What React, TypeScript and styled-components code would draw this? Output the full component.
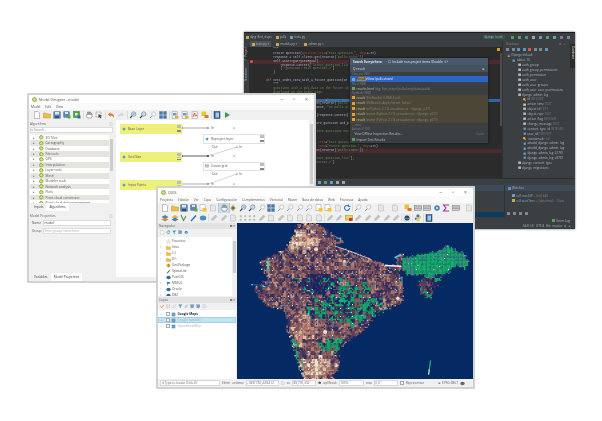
import * as React from 'react';
import { useMemo } from 'react';
import styled, { createGlobalStyle } from 'styled-components';

const GlobalStyle = createGlobalStyle`
  html, body { margin: 0; padding: 0; background: #fff; }
`;

const Stage = styled.div`
  position: relative;
  width: 602px;
  height: 421px;
  overflow: hidden;
  background: #fff;
  filter: blur(0.4px);
  font-family: 'Open Sans', 'Liberation Sans', sans-serif;
`;

const Window = styled.div<{ $x: number; $y: number; $w: number; $h: number }>`
  position: absolute;
  left: ${(p) => p.$x}px;
  top: ${(p) => p.$y}px;
  width: ${(p) => p.$w}px;
  height: ${(p) => p.$h}px;
  box-sizing: border-box;
  display: flex;
  flex-direction: column;
  overflow: hidden;
`;

const LightWindow = styled(Window)`
  background: #f0f0f0;
  border: 2px solid #d2d2d2;
  border-radius: 1px;
  color: #444;
  font-size: 3.2px;
`;

const DarkWindow = styled(Window)`
  background: #3c3f41;
  border-top: 1px solid #1c1c1c;
  box-shadow: 0 0 2px #555;
  color: #a9b7c6;
  font-size: 3px;
`;

/* ---------- shared light-window chrome ---------- */

const TitleBar = styled.div`
  height: 8px;
  flex: none;
  display: flex;
  align-items: center;
  gap: 2px;
  padding: 0 6px 0 3px;
  background: #fff;
  font-size: 3.6px;
  color: #555;
`;

const TitleText = styled.span`
  flex: 1;
`;

const WinControls = styled.div`
  display: flex;
  align-items: center;
  gap: 10px;
  font-family: 'Liberation Sans', sans-serif;
  font-size: 5px;
  line-height: 7px;
  color: #666;
`;

const MenuBar = styled.div<{ $gap: number }>`
  height: 7px;
  flex: none;
  display: flex;
  align-items: center;
  gap: ${(p) => p.$gap}px;
  padding: 0 2px;
  background: #fafafa;
  font-size: 3.2px;
  white-space: nowrap;
  color: #555;
`;

const ToolBar = styled.div<{ $gap: number; $pad: number }>`
  height: 10px;
  flex: none;
  display: flex;
  align-items: center;
  gap: ${(p) => p.$gap}px;
  padding-left: ${(p) => p.$pad}px;
  background: #f0f0f0;
  overflow: hidden;
`;

const Sep = styled.span`
  width: 1px;
  height: 8px;
  margin: 0 -0.5px;
  background: #dcdcdc;
  flex: none;
`;

const DropGap = styled.span`
  width: 2.5px;
  flex: none;
`;

const Pressed = styled.span`
  display: flex;
  margin: -1px;
  padding: 1px;
  background: #c5dff2;
  outline: 1px solid #a8cfe8;
`;

const IconSvg = styled.svg<{ $size: number }>`
  width: ${(p) => p.$size}px;
  height: ${(p) => p.$size}px;
  flex: none;
  display: block;
`;

const Glyph = ({ kind, size = 8 }: { kind: string; size?: number }) => {
  const parts: Record<string, React.ReactNode> = {
    doc: <path d="M3 1h7l3 3v11H3z" fill="#fff" stroke="#888" />,
    folder: <path d="M1 4h5l1 2h8v8H1z" fill="#f0bc44" stroke="#c99a2e" />,
    disk: (
      <>
        <rect x="1.5" y="1.5" width="13" height="13" fill="#5c86b4" stroke="#3f6690" />
        <rect x="4" y="2" width="8" height="5" fill="#dfe9f2" />
        <rect x="4" y="10" width="8" height="4" fill="#2f5278" />
      </>
    ),
    diskadd: (
      <>
        <rect x="1.5" y="1.5" width="11" height="11" fill="#5c86b4" stroke="#3f6690" />
        <rect x="4" y="2" width="6" height="4" fill="#dfe9f2" />
        <rect x="9" y="9" width="6" height="6" fill="#5aa83c" />
      </>
    ),
    export: (
      <>
        <rect x="1" y="1" width="12" height="12" fill="#4ea84a" stroke="#2f7a31" />
        <rect x="4" y="4" width="5" height="5" fill="#d9efc9" />
        <rect x="9" y="9" width="6" height="6" fill="#2f6aa8" />
      </>
    ),
    note: (
      <>
        <rect x="2" y="1.5" width="10" height="12" fill="#fff" stroke="#999" />
        <rect x="7" y="8" width="8" height="7" fill="#f2c230" />
      </>
    ),
    report: (
      <>
        <rect x="2" y="1.5" width="11" height="13" fill="#eee" stroke="#999" />
        <rect x="4" y="4" width="7" height="5" fill="#6d9dcc" />
        <rect x="8" y="10" width="7" height="5" fill="#eab23a" />
      </>
    ),
    pdf: (
      <>
        <rect x="2" y="1.5" width="11" height="13" fill="#eee" stroke="#999" />
        <path d="M4 12l3-8 2 6 3-2" fill="none" stroke="#d0402f" strokeWidth="1.6" />
      </>
    ),
    hand: (
      <path
        d="M5 14L2 8l1.5-1L5 8V2.5h1.5V7h1V1.5H9V7h1V2.5h1.5V8h1V5H14v6l-1.5 3z"
        fill="#fff"
        stroke="#555"
        strokeWidth="0.9"
      />
    ),
    select: (
      <>
        <rect x="2" y="2" width="10" height="10" fill="none" stroke="#777" strokeDasharray="2 1" />
        <path d="M7 6l7 4-3 1 2 3-2 1-2-3-2 2z" fill="#444" />
      </>
    ),
    undo: <path d="M2 7l5-5v3c5 0 8 3 7 9-1-3-3-5-7-5v3z" fill="#e0782c" />,
    redo: <path d="M14 7L9 2v3c-5 0-8 3-7 9 1-3 3-5 7-5v3z" fill="#d5d5d5" />,
    zoomin: (
      <>
        <circle cx="9.5" cy="6" r="4.3" fill="#e7f0f8" stroke="#5e7f9f" strokeWidth="1.4" />
        <path d="M6.5 9.5L2 14" stroke="#33506e" strokeWidth="2.2" />
        <path d="M7.5 6h4M9.5 4v4" stroke="#4d7ba8" />
      </>
    ),
    zoomout: (
      <>
        <circle cx="9.5" cy="6" r="4.3" fill="#e7f0f8" stroke="#5e7f9f" strokeWidth="1.4" />
        <path d="M6.5 9.5L2 14" stroke="#33506e" strokeWidth="2.2" />
        <path d="M7.5 6h4" stroke="#4d7ba8" />
      </>
    ),
    zoomdim: (
      <>
        <circle cx="9.5" cy="6" r="4.3" fill="#f5f5f5" stroke="#a5b4c2" strokeWidth="1.2" />
        <path d="M6.5 9.5L2 14" stroke="#8d9cac" strokeWidth="1.8" />
      </>
    ),
    grid: (
      <path d="M1 1h6v6H1zM9 1h6v6H9zM1 9h6v6H1zM9 9h6v6H9z" fill="#3f78b2" stroke="#2b557f" strokeWidth="0.5" />
    ),
    pan: (
      <>
        <path d="M8 1l6 7-6 7-6-7z" fill="#e8b52e" />
        <circle cx="8" cy="8" r="3" fill="#3d6fa5" />
      </>
    ),
    refresh: (
      <path d="M13 8a5 5 0 1 1-2-4M11 1v4h4" fill="none" stroke="#2d7fc0" strokeWidth="2.2" />
    ),
    dim: <path d="M3 2h8l2 2v10H3z" fill="#e8e8e8" stroke="#b0b0b0" />,
    dimnode: (
      <path d="M2 3h3v3H2zM11 3h3v3h-3zM2 10h3v3H2zM11 10h3v3h-3z" fill="#c8c8c8" stroke="#989898" strokeWidth="0.6" />
    ),
    dimpen: <path d="M3 13l1-4 7-7 3 3-7 7z" fill="#c4c4c4" stroke="#989898" strokeWidth="0.6" />,
    gear: (
      <>
        <circle cx="8" cy="8" r="5.5" fill="#3f86bd" />
        <circle cx="8" cy="8" r="2" fill="#e6f0f8" />
      </>
    ),
    sigma: <path d="M13 3V2H3l5 6-5 6h10v-1" fill="none" stroke="#a2358f" strokeWidth="2.2" />,
    table: (
      <>
        <rect x="1" y="3" width="14" height="10" fill="#e2e2e2" stroke="#777" />
        <path d="M1 6h14M1 9.5h14" stroke="#666" strokeWidth="1.2" />
      </>
    ),
    yellow: (
      <>
        <rect x="1" y="1" width="9" height="9" fill="#f0c22a" />
        <rect x="7" y="8" width="8" height="6" fill="#e0762e" />
      </>
    ),
    label: (
      <>
        <rect x="1" y="3" width="14" height="9" fill="#ecd24a" stroke="#998a30" />
        <rect x="8" y="8" width="7" height="6" fill="#c63a2e" />
      </>
    ),
    globe: (
      <>
        <rect x="1" y="1" width="14" height="14" rx="2" fill="#d5dfe6" />
        <circle cx="8" cy="8" r="5" fill="#2c4b6a" />
        <path d="M3 9h10" stroke="#9ec0da" />
      </>
    ),
    python: (
      <>
        <path d="M8 1c-3 0-3 1-3 3v2h6v1H3C1 7 1 12 3 12h2V9h6V3c0-1-1-2-3-2z" fill="#3d78ad" />
        <path d="M8 15c3 0 3-1 3-3v-2H5V9h8c2 0 2-5 0-5h-2v3H5v6c0 1 1 2 3 2z" fill="#f2cb45" />
      </>
    ),
    book: (
      <>
        <rect x="2" y="1" width="12" height="14" fill="#2b5f95" stroke="#1f4670" />
        <rect x="5" y="3" width="7" height="10" fill="#a7c8e3" />
      </>
    ),
    play: <path d="M4 2l10 6-10 6z" fill="#3f9a45" />,
    layer: (
      <>
        <path d="M8 2l7 4-7 4-7-4z" fill="#3d86c0" />
        <path d="M8 7l7 4-7 4-7-4z" fill="#e3843a" />
      </>
    ),
    layer2: (
      <>
        <path d="M8 2l7 4-7 4-7-4z" fill="#e8b63b" />
        <path d="M8 7l7 4-7 4-7-4z" fill="#3d86c0" />
      </>
    ),
    vector: <path d="M2 2l5 11 5-9" fill="none" stroke="#5a8f3f" strokeWidth="2.2" />,
    wand: <path d="M2 14L12 3" stroke="#2d6ca5" strokeWidth="2.6" />,
    blob: <ellipse cx="8" cy="8" rx="6.5" ry="5" fill="#4a8cc4" />,
    filter: <path d="M1 2h14L9.5 8.5V14l-3-1V8.5z" fill="#3f9ab0" />,
    tick: <path d="M2 8l4 5 8-10" fill="none" stroke="#d77b2c" strokeWidth="2.4" />,
    mini: <rect x="3" y="3" width="10" height="10" fill="#6f9fc7" stroke="#406c94" />,
    star: <path d="M8 1l2 5h5l-4 3.5 1.6 5.4L8 12l-4.6 2.9L5 9.5 1 6h5z" fill="#eee" stroke="#bbb" />,
    msg: <ellipse cx="8" cy="8" rx="7" ry="5.5" fill="#666" />,
    sqlite: <path d="M2 14c3-6 6-10 12-12-2 4-5 9-10 12z" fill="#3f6f9c" />,
    cloud: <ellipse cx="8" cy="8" rx="7" ry="5.5" fill="#39688f" />,
    pkg: (
      <>
        <path d="M2 5l6-3 6 3v6l-6 3-6-3z" fill="#d9aa33" />
        <path d="M8 2v12" stroke="#7b6420" />
      </>
    ),
    flag: <path d="M3 2h2v12H3zM5 3h9l-3 3 3 3H5z" fill="#3a77ac" />,
  };
  return (
    <IconSvg $size={size} viewBox="0 0 16 16">
      {parts[kind]}
    </IconSvg>
  );
};

const QLogo = ({ size = 6 }: { size?: number }) => (
  <IconSvg $size={size} viewBox="0 0 16 16">
    <circle cx="8" cy="8" r="6" fill="#e9e27a" stroke="#6a9f34" strokeWidth="3" />
    <path d="M10 10l5 5" stroke="#c9c045" strokeWidth="2.6" />
  </IconSvg>
);

const Tools = ({ items }: { items: string }) => (
  <>
    {items.split(' ').map((k, i) => {
      if (k === '|') return <Sep key={i} />;
      if (k === '_') return <DropGap key={i} />;
      if (k === 'hand*')
        return (
          <Pressed key={i}>
            <Glyph kind="hand" />
          </Pressed>
        );
      return <Glyph key={i} kind={k} />;
    })}
  </>
);

/* ---------- PyCharm ---------- */

const NavBar = styled.div`
  height: 8px;
  flex: none;
  display: flex;
  align-items: center;
  gap: 4px;
  padding: 0 5px 0 2px;
  color: #b5bec8;
  background: #3c3f41;
`;

const NavCrumb = styled.span`
  display: flex;
  align-items: center;
  gap: 1px;
`;

const Spacer = styled.span`
  flex: 1;
`;

const RunBox = styled.span`
  color: #9fb2c4;
  background: #36514a;
  padding: 0 1.5px;
  margin-right: 2px;
`;

const Dot = styled.span<{ $c: string }>`
  width: 3px;
  height: 3px;
  background: ${(p) => p.$c};
  flex: none;
  display: inline-block;
`;

const IdeMain = styled.div`
  flex: 1;
  display: flex;
  min-height: 0;
`;

const SideStrip = styled.div`
  width: 5px;
  flex: none;
  background: #3c3f41;
  display: flex;
  flex-direction: column;
  align-items: center;
  gap: 8px;
  padding-top: 6px;
`;

const SideLabel = styled.span<{ $on?: boolean }>`
  writing-mode: vertical-rl;
  transform: rotate(180deg);
  line-height: 5px;
  color: #aab2b9;
  background: ${(p) => (p.$on ? '#2b2b2b' : 'transparent')};
`;

const CenterColumn = styled.div`
  width: 253px;
  flex: none;
  display: flex;
  flex-direction: column;
`;

const TabBar = styled.div`
  height: 6px;
  flex: none;
  display: flex;
  gap: 3px;
  padding-left: 1px;
  background: #3c3f41;
`;

const FileTab = styled.div<{ $on?: boolean }>`
  display: flex;
  align-items: center;
  gap: 1px;
  padding: 0 2px;
  white-space: nowrap;
  background: ${(p) => (p.$on ? '#4e5254' : 'transparent')};
  color: #a9b7c6;
`;

const EditorPane = styled.div`
  flex: 1;
  background: #2b2b2b;
  padding-top: 1px;
  font-family: 'Liberation Mono', 'DejaVu Sans Mono', monospace;
  font-size: 3px;
  line-height: 3.9px;
  white-space: pre;
  overflow: hidden;
  position: relative;
`;

const CodeLine = styled.div<{ $tone?: string }>`
  height: 3.9px;
  padding-left: 17px;
  color: #a9b7c6;
  background: ${(p) =>
    p.$tone === 'red' ? '#4b2b2d' : p.$tone === 'blue' ? '#2f66a8' : 'transparent'};
`;

const Kw = styled.span`
  color: #cc7832;
`;
const Str = styled.span`
  color: #6a8759;
`;
const Param = styled.span`
  color: #aa4926;
`;
const Num = styled.span`
  color: #6897bb;
`;

const Breakpoint = styled.span`
  position: absolute;
  left: 1px;
  top: 13px;
  width: 3px;
  height: 3px;
  border-radius: 50%;
  background: #d9534f;
`;

const RightMark = styled.span`
  position: absolute;
  right: 2px;
  top: 1px;
  width: 3px;
  height: 3px;
  background: #c9a227;
`;

const EditorScroll = styled.span`
  position: absolute;
  right: 0;
  top: 6px;
  width: 2px;
  height: 73px;
  background: #4b4e50;
`;

const DbPanel = styled.div`
  flex: 1;
  background: #3c3f41;
  border-left: 1px solid #323232;
  overflow: hidden;
`;

const DbTitle = styled.div`
  height: 5px;
  display: flex;
  align-items: center;
  padding: 0 3px;
  color: #7f868c;
  justify-content: space-between;
`;

const DbTools = styled.div`
  height: 7px;
  display: flex;
  align-items: center;
  gap: 2.5px;
  padding-left: 3px;
`;

const DbRow = styled.div<{ $d: number }>`
  height: 4.9px;
  display: flex;
  align-items: center;
  gap: 1px;
  padding-left: ${(p) => 4 + p.$d * 5.3}px;
  font-size: 3.1px;
  color: #a9b7c6;
  white-space: nowrap;
`;

const DbType = styled.span`
  color: #6f767c;
`;

const RightStrip = styled.div`
  width: 6px;
  flex: none;
  background: #3c3f41;
  padding-top: 3px;
  display: flex;
  justify-content: center;
`;

const RightLabel = styled.span`
  writing-mode: vertical-rl;
  line-height: 5px;
  color: #d5d9dc;
  background: #2b2b2b;
  padding: 2px 0;
  height: 20px;
`;

const ToolStrip = styled.div`
  height: 7px;
  flex: none;
  display: flex;
  align-items: center;
  gap: 3px;
  padding-left: 74px;
  background: #3c3f41;
  border-top: 1px solid #2f2f2f;
  box-sizing: border-box;
`;

const DebugArea = styled.div`
  height: 33px;
  flex: none;
  display: flex;
  background: #3c3f41;
`;

const DebugLeft = styled.div`
  flex: 1;
  display: flex;
  flex-direction: column;
  justify-content: flex-end;
  padding-bottom: 1.5px;
`;

const DebugHead = styled.div`
  height: 6px;
  background: #3d4b59;
  margin-bottom: auto;
`;

const SelectedFrame = styled.div`
  height: 5px;
  background: #0d3a5f;
`;

const Watches = styled.div`
  width: 70px;
  flex: none;
  border-left: 1px solid #323232;
  display: flex;
  flex-direction: column;
`;

const WatchHead = styled.div`
  height: 6px;
  flex: none;
  margin-bottom: 2px;
  background: #3d4b59;
  display: flex;
  align-items: center;
  gap: 1px;
  padding-left: 3px;
  color: #a9b7c6;
`;

const WatchRow = styled.div`
  height: 5px;
  flex: none;
  display: flex;
  align-items: center;
  gap: 1px;
  padding-left: 7px;
  white-space: nowrap;
  color: #7aa6d0;
`;

const WatchTools = styled.div`
  margin-top: auto;
  display: flex;
  gap: 3px;
  padding: 0 0 3px 2px;
`;

const EventRow = styled.div`
  height: 5px;
  flex: none;
  display: flex;
  justify-content: flex-end;
  align-items: center;
  gap: 1px;
  padding-right: 5px;
  color: #a9b7c6;
  background: #3c3f41;
`;

const StatusRow = styled.div`
  height: 6px;
  flex: none;
  display: flex;
  justify-content: flex-end;
  align-items: center;
  padding-right: 4px;
  word-spacing: 1px;
  color: #a9b7c6;
  background: #3c3f41;
`;

/* search everywhere popup, floats over the editor */
const Popup = styled.div`
  position: absolute;
  left: 101px;
  top: 11px;
  width: 138px;
  height: 85px;
  background: #3c3f41;
  display: flex;
  flex-direction: column;
  font-family: 'Open Sans', sans-serif;
  font-size: 3.2px;
  line-height: 4px;
  z-index: 2;
  box-shadow: 0 0 2px #111;
`;

const PopupHead = styled.div`
  height: 7px;
  flex: none;
  background: #47596b;
  display: flex;
  align-items: center;
  gap: 6px;
  padding: 0 3px;
  color: #dce3ea;
`;

const PopupHeadTitle = styled.b`
  font-weight: 700;
  font-size: 3px;
`;

const PopupSearch = styled.div`
  height: 7px;
  flex: none;
  background: #45525e;
  display: flex;
  align-items: center;
  justify-content: space-between;
  padding: 0 3px;
  color: #d2d8dd;
`;

const PopupSection = styled.div`
  height: 4px;
  flex: none;
  padding-left: 2px;
  line-height: 4px;
  font-size: 2.8px;
  color: #7d8489;
`;

const PopupRow = styled.div<{ $v?: 'sel' | 'sym' | 'thin' }>`
  height: ${(p) => (p.$v === 'sym' ? 5.5 : p.$v === 'thin' ? 5 : 6)}px;
  flex: none;
  display: flex;
  align-items: center;
  gap: 1.5px;
  padding-left: 2px;
  white-space: nowrap;
  overflow: hidden;
  background: ${(p) =>
    p.$v === 'sel' ? '#2c65c5' : p.$v === 'sym' ? '#4b4635' : 'transparent'};
  color: ${(p) => (p.$v === 'sel' ? '#e8eef8' : '#b8bdc2')};
`;

const Mark = styled.span`
  background: #a08a3c;
  color: #2b2b2b;
`;

const Dimmed = styled.span`
  color: #7f8689;
`;

const RowRight = styled.span`
  margin-left: auto;
  padding-right: 4px;
  color: #6d7377;
`;

// from y=93 down the model window hides the left of the editor, so those lines start at column 28
const PAD = ' '.repeat(28);

const codeLines: [React.ReactNode, string?][] = [
  ['    """'],
  [
    <>
      {'    create_question('}
      <Param>question_text</Param>=<Str>"Past question."</Str>, <Param>days</Param>=<Num>-30</Num>)
    </>,
  ],
  [
    <>
      {'    response = self.client.get(reverse('}
      <Str>'polls:index'</Str>))
    </>,
  ],
  ['    self.assertQuerysetEqual(', 'red'],
  [
    <>
      {'        response.context['}
      <Str>'latest_question_list</Str>
    </>,
  ],
  [
    <>
      {'        ['}
      <Str>'&lt;Question: Past question.&gt;'</Str>]
    </>,
  ],
  ['    )'],
  [''],
  [
    <>
      <Kw>def </Kw>test_index_view_with_a_future_question(se
    </>,
  ],
  ['    """'],
  [<Str>    Questions with a pub_date in the future sh</Str>],
  [<Str>    displayed on the index page.</Str>],
  [''],
  [
    <>
      {PAD}
      <Param>_text</Param>=<Str>"Future ques</Str>
    </>,
    'blue',
  ],
  [
    <>
      {PAD}et(reverse(<Str>'polls:</Str>
    </>,
  ],
  [
    <>
      {PAD}onse, <Str>"No polls ar</Str>
    </>,
  ],
  [''],
  [PAD + '(response.context['],
  [''],
  [PAD + 'ure_question_and_p'],
  [''],
  [<Str>{PAD}ture questions exi</Str>],
  [''],
  [''],
  [
    <>
      {PAD}
      <Param>_text</Param>=<Str>"Past questi</Str>
    </>,
  ],
  [
    <>
      {PAD}
      <Param>_text</Param>=<Str>"Future question."</Str>, <Param>days</Param>=<Num>30</Num>)
    </>,
  ],
  [
    <>
      {PAD}et(reverse(<Str>'polls:index'</Str>))
    </>,
    'red',
  ],
  [''],
  [
    <>
      {PAD}
      <Str>test_question_list'</Str>],
    </>,
  ],
  [
    <>
      {PAD}
      <Str>estion.&gt;'</Str>]
    </>,
  ],
];

const dbTree: [number, string, string, string?][] = [
  [0, 'layer', 'Django default'],
  [1, 'mini', 'tables 10'],
  [2, 'table', 'auth_group'],
  [2, 'table', 'auth_group_permissions'],
  [2, 'table', 'auth_permission'],
  [2, 'table', 'auth_user'],
  [2, 'table', 'auth_user_groups'],
  [2, 'table', 'auth_user_user_permissions'],
  [2, 'table', 'django_admin_log'],
  [3, 'yellow', 'id', 'INTEGER'],
  [3, 'table', 'action_time', 'TEXT'],
  [3, 'table', 'object_id', 'TEXT'],
  [3, 'table', 'object_repr', 'TEXT'],
  [3, 'table', 'action_flag', 'INTEGER'],
  [3, 'table', 'change_message', 'TEXT'],
  [3, 'mini', 'content_type_id', 'INTEGER'],
  [3, 'mini', 'user_id', 'INTEGER'],
  [3, 'yellow', '<unnamed>', '(id)'],
  [3, 'mini', 'attadd_django_admin_log'],
  [3, 'mini', 'attadd_django_admin_log'],
  [3, 'mini', 'django_admin_log_417f3'],
  [3, 'mini', 'django_admin_log_e8781'],
  [2, 'table', 'django_content_type'],
  [2, 'table', 'django_migrations'],
];

const IdeWindow = () => (
  <DarkWindow $x={244} $y={32} $w={331} $h={197}>
    <NavBar>
      <NavCrumb>
        <Dot $c="#c9a74a" />
        djng_first_steps
      </NavCrumb>
      <NavCrumb>
        <Dot $c="#c9a74a" />
        polls
      </NavCrumb>
      <NavCrumb>
        <Dot $c="#6b9bc3" />
        tests.py
      </NavCrumb>
      <Spacer />
      <RunBox>django_test ▾</RunBox>
      <Dot $c="#4f9d4f" />
      <Dot $c="#5a9e6f" />
      <Dot $c="#4d8f8f" />
      <Dot $c="#9aa5ae" />
      <Dot $c="#6b9bc3" />
      <Dot $c="#5a9e6f" />
      <Dot $c="#6b9bc3" />
      <Dot $c="#8c6bb0" />
      <Dot $c="#7e8890" />
    </NavBar>
    <IdeMain>
      <SideStrip>
        <SideLabel $on>1: Project</SideLabel>
        <SideLabel>Structure</SideLabel>
      </SideStrip>
      <CenterColumn>
        <TabBar>
          <FileTab $on>
            <Dot $c="#c9a74a" />
            tests.py ×
          </FileTab>
          <FileTab>
            <Dot $c="#c9a74a" />
            models.py ×
          </FileTab>
          <FileTab>
            <Dot $c="#c9a74a" />
            admin.py ×
          </FileTab>
        </TabBar>
        <EditorPane>
          <Breakpoint />
          <RightMark />
          <EditorScroll />
          {codeLines.map(([node, tone], i) => (
            <CodeLine key={i} $tone={tone}>
              {node}
            </CodeLine>
          ))}
          <Popup>
            <PopupHead>
              <PopupHeadTitle>Search Everywhere:</PopupHeadTitle>
              <span>☐ Include non-project items (Double ⇧)</span>
            </PopupHead>
            <PopupSearch>
              <span>Q result</span>
              <span>⊗</span>
            </PopupSearch>
            <PopupSection>Classes (1/40)</PopupSection>
            <PopupRow $v="sel">
              <Dot $c="#6ea9d6" />
              <span>
                <Mark>Result</Mark>sView (polls.views)
              </span>
            </PopupRow>
            <PopupSection>Files (1/83)</PopupSection>
            <PopupRow $v="thin">
              <Dot $c="#7f9a62" />
              <span>
                results.html <Dimmed>(djg_first_steps/polls/templates/polls)</Dimmed>
              </span>
            </PopupRow>
            <PopupSection>Symbols (7/82)</PopupSection>
            <PopupRow $v="sym">
              <Dot $c="#e0a040" />
              <span>
                result <Dimmed>(FileReader (HTML5.js))</Dimmed>
              </span>
            </PopupRow>
            <PopupRow $v="sym">
              <Dot $c="#e0a040" />
              <span>
                result <Dimmed>(DbResults ApplyServer_Sales)</Dimmed>
              </span>
            </PopupRow>
            <PopupRow $v="sym">
              <Dot $c="#e0a040" />
              <span>
                result <Dimmed>in (Python 2.7.8 virtualenv at ~/django_p27)</Dimmed>
              </span>
            </PopupRow>
            <PopupRow $v="sym">
              <Dot $c="#e0a040" />
              <span>
                result <Dimmed>(event (Python 2.7.8 virtualenv at ~/django_p27))</Dimmed>
              </span>
            </PopupRow>
            <PopupRow $v="sym">
              <Dot $c="#e0a040" />
              <span>
                result <Dimmed>(event (Python 2.7.8 virtualenv at ~/django_p27))</Dimmed>
              </span>
            </PopupRow>
            <PopupSection>... more</PopupSection>
            <PopupSection>Actions (1/63)</PopupSection>
            <PopupRow>
              <span>&nbsp;&nbsp;&nbsp;View Offline Inspection Results...</span>
              <RowRight>Code</RowRight>
            </PopupRow>
            <PopupRow>
              <Dot $c="#5aa05a" />
              <span>Import Test Results</span>
            </PopupRow>
          </Popup>
        </EditorPane>
      </CenterColumn>
      <DbPanel>
        <DbTitle>
          <span>Database</span>
          <span>⚙ ⊥</span>
        </DbTitle>
        <DbTools>
          <Dot $c="#7e8890" />
          <Dot $c="#7e8890" />
          <Dot $c="#5f92c0" />
          <Dot $c="#5f92c0" />
          <Dot $c="#d05a50" />
          <Dot $c="#7e8890" />
          <Dot $c="#7e8890" />
          <Dot $c="#5f92c0" />
        </DbTools>
        {dbTree.map(([d, k, name, type], i) => (
          <DbRow key={i} $d={d}>
            <Glyph kind={k} size={3.5} />
            <span>
              {name} {type && <DbType>{type}</DbType>}
            </span>
          </DbRow>
        ))}
      </DbPanel>
      <RightStrip>
        <RightLabel>Database</RightLabel>
      </RightStrip>
    </IdeMain>
    <ToolStrip>
      <Dot $c="#6b9bc3" />
      <Dot $c="#5a9e6f" />
      <Dot $c="#6b9bc3" />
      <Dot $c="#9aa5ae" />
      <Dot $c="#9aa5ae" />
    </ToolStrip>
    <DebugArea>
      <DebugLeft>
        <DebugHead />
        <SelectedFrame />
      </DebugLeft>
      <Watches>
        <WatchHead>
          <Dot $c="#5f92c0" />
          Watches
        </WatchHead>
        <WatchRow>
          <Dot $c="#6b9bc3" />
          self.maxDiff = <Dimmed>{'{int} 640'}</Dimmed>
        </WatchRow>
        <WatchRow>
          <Dot $c="#c9a74a" />
          self.startTime = <Dimmed>{'{datetime} ... View'}</Dimmed>
        </WatchRow>
        <WatchTools>
          <Dot $c="#7e8890" />
          <Dot $c="#7e8890" />
          <Dot $c="#7e8890" />
          <Dot $c="#7e8890" />
        </WatchTools>
      </Watches>
    </DebugArea>
    <EventRow>
      <Dot $c="#5aa05a" />
      Event Log
    </EventRow>
    <StatusRow>54:8 LF: UTF-8 Git: master ⚲ ☺</StatusRow>
  </DarkWindow>
);

/* ---------- Model Designer ---------- */

const PanelHead = styled.div`
  height: 7px;
  flex: none;
  display: flex;
  justify-content: space-between;
  align-items: center;
  padding: 0 3px 0 0;
  color: #666;
`;

const ModelBody = styled.div`
  flex: 1;
  display: flex;
  min-height: 0;
`;

const ModelLeft = styled.div`
  width: 87px;
  flex: none;
  display: flex;
  flex-direction: column;
  padding-left: 1px;
  box-sizing: border-box;
`;

const SearchBox = styled.div`
  height: 6px;
  flex: none;
  margin-right: 3px;
  display: flex;
  align-items: center;
  gap: 1px;
  padding-left: 1px;
  background: #fff;
  box-shadow: inset 0 0 0 1px #dcdcdc;
  color: #888;
`;

const AlgoTree = styled.div`
  height: 68px;
  flex: none;
  margin: 2px 3px 0 0;
  background: #fff;
  position: relative;
  overflow: hidden;
`;

const AlgoRow = styled.div<{ $alt: boolean }>`
  height: 5.45px;
  display: flex;
  align-items: center;
  gap: 2px;
  padding-left: 3px;
  color: #555;
  background: ${(p) => (p.$alt ? '#e6e4df' : '#fff')};
`;

const Caret = styled.span`
  font-size: 3px;
  line-height: 4px;
  color: #666;
  width: 4px;
  flex: none;
`;

const VScroll = styled.div`
  position: absolute;
  right: 0;
  top: 0;
  bottom: 0;
  width: 4px;
  background: #f0f0f0;
  &::after {
    content: '';
    position: absolute;
    left: 0.5px;
    right: 0.5px;
    top: 4px;
    height: 32px;
    background: #cdcdcd;
  }
`;

const TabRow = styled.div`
  height: 8px;
  flex: none;
  display: flex;
  padding-left: 1px;
`;

const BottomTabs = styled(TabRow)`
  margin-top: auto;
`;

const PanelTab = styled.div<{ $on?: boolean }>`
  display: flex;
  align-items: center;
  padding: 0 3px;
  background: ${(p) => (p.$on ? '#fdfdfd' : 'transparent')};
`;

const PropsHead = styled(PanelHead)`
  margin-top: 1px;
`;

const FormRow = styled.div`
  height: 8px;
  flex: none;
  display: flex;
  align-items: center;
  gap: 2px;
  padding: 0 5px 0 2px;
  color: #555;
`;

const FormLabel = styled.span`
  width: 9px;
  text-align: right;
`;

const FormInput = styled.div<{ $hint?: boolean }>`
  flex: 1;
  height: 6px;
  line-height: 6px;
  background: #fff;
  box-shadow: inset 0 0 0 1px #dedede;
  padding-left: 1.5px;
  color: ${(p) => (p.$hint ? '#aaa' : '#444')};
`;

const Canvas = styled.div`
  flex: 1;
  position: relative;
  background: #fff;
  overflow: hidden;
`;

const WireLayer = styled.svg`
  position: absolute;
  left: 0;
  top: 0;
  width: 196px;
  height: 155px;
`;

const FlowNode = styled.div<{ $x: number; $y: number; $input?: boolean }>`
  position: absolute;
  left: ${(p) => p.$x}px;
  top: ${(p) => p.$y}px;
  width: 62px;
  height: 9.5px;
  box-sizing: border-box;
  display: flex;
  align-items: center;
  gap: 2px;
  padding: 0 1px 0 2px;
  color: #555;
  background: ${(p) => (p.$input ? '#eef07c' : '#fff')};
  box-shadow: ${(p) => (p.$input ? 'none' : 'inset 0 0 0 1px #e2e2e2')};
`;

const NodeButtons = styled.span`
  margin-left: auto;
  width: 4px;
  height: 7px;
  background: linear-gradient(#bdbdbd 0 3px, transparent 3px 4px, #bdbdbd 4px 4.5px, transparent 4.5px 5.5px, #888 5.5px);
`;

const PortLabel = styled.span<{ $x: number; $y: number }>`
  position: absolute;
  left: ${(p) => p.$x}px;
  top: ${(p) => p.$y}px;
  line-height: 5px;
  color: #555;
`;

const CanvasHScroll = styled.div`
  position: absolute;
  left: 0;
  right: 0;
  bottom: 0;
  height: 4px;
  background: #efefef;
`;

const CanvasVScroll = styled.div`
  position: absolute;
  right: 0;
  top: 0;
  bottom: 4px;
  width: 5px;
  background: #f0f0f0;
  &::after {
    content: '';
    position: absolute;
    left: 1px;
    right: 1px;
    top: 4px;
    height: 60px;
    background: #cdcdcd;
  }
`;

const algorithms = [
  '3D Tiles',
  'Cartography',
  'Database',
  'File tools',
  'GPS',
  'Interpolation',
  'Layer tools',
  'Mesh',
  'Modeler tools',
  'Network analysis',
  'Plots',
  'Point cloud conversion',
  'Point cloud data management',
];

const ModelWindow = () => (
  <LightWindow $x={27} $y={93} $w={289} $h={190}>
    <TitleBar>
      <QLogo size={5} />
      <TitleText>Model Designer - model</TitleText>
      <WinControls>
        <span>–</span>
        <span>▫</span>
        <span>×</span>
      </WinControls>
    </TitleBar>
    <MenuBar $gap={5}>
      <span>Model</span>
      <span>Edit</span>
      <span>View</span>
    </MenuBar>
    <ToolBar $gap={2} $pad={4}>
      <Tools items="doc folder disk diskadd export | hand select | undo redo | zoomin zoomout zoomdim grid | report report pdf yellow | book play" />
    </ToolBar>
    <ModelBody>
      <ModelLeft>
        <PanelHead>
          <span>Algorithms</span>
          <Glyph kind="dim" size={4} />
        </PanelHead>
        <SearchBox>⚲ Search...</SearchBox>
        <AlgoTree>
          {algorithms.map((a, i) => (
            <AlgoRow key={a} $alt={i % 2 === 1}>
              <Caret>▸</Caret>
              <QLogo size={4.6} />
              {a}
            </AlgoRow>
          ))}
          <VScroll />
        </AlgoTree>
        <TabRow>
          <PanelTab>Inputs</PanelTab>
          <PanelTab $on>Algorithms</PanelTab>
        </TabRow>
        <PropsHead>
          <span>Model Properties</span>
          <Glyph kind="dim" size={4} />
        </PropsHead>
        <FormRow>
          <FormLabel>Name</FormLabel>
          <FormInput>model</FormInput>
        </FormRow>
        <FormRow>
          <FormLabel>Group</FormLabel>
          <FormInput $hint>Enter group name here</FormInput>
        </FormRow>
        <BottomTabs>
          <PanelTab>Variables</PanelTab>
          <PanelTab $on>Model Properties</PanelTab>
        </BottomTabs>
      </ModelLeft>
      <Canvas>
        <WireLayer viewBox="0 0 196 155">
          <path d="M66 8H92" stroke="#777" strokeWidth="0.6" />
          <path d="M66 36H92" stroke="#333" strokeWidth="0.8" />
          <path d="M66 64H92" stroke="#777" strokeWidth="0.6" />
          <path d="M121 27L92 36" stroke="#aaa" strokeWidth="0.5" fill="none" />
          <path d="M121 54L92 64" stroke="#aaa" strokeWidth="0.5" fill="none" />
          <g fill="#333">
            <circle cx="92" cy="36" r="1" />
            <circle cx="66" cy="8" r="0.7" />
            <circle cx="66" cy="36" r="0.7" />
            <circle cx="92" cy="8" r="0.7" />
            <circle cx="92" cy="64" r="0.7" />
            <circle cx="118" cy="8" r="0.6" />
            <circle cx="118" cy="36" r="0.6" />
            <circle cx="118" cy="64" r="0.6" />
            <circle cx="121" cy="27" r="0.6" />
            <circle cx="121" cy="54" r="0.6" />
          </g>
        </WireLayer>
        <FlowNode $x={4} $y={4} $input>
          <Glyph kind="gear" size={4} />
          Base Layer
          <NodeButtons />
        </FlowNode>
        <FlowNode $x={4} $y={32} $input>
          <Glyph kind="gear" size={4} />
          Grid Size
          <NodeButtons />
        </FlowNode>
        <FlowNode $x={4} $y={60} $input>
          <Glyph kind="gear" size={4} />
          Input Points
          <NodeButtons />
        </FlowNode>
        <FlowNode $x={87} $y={14}>
          <Glyph kind="gear" size={4} />
          Reproject layer
          <NodeButtons />
        </FlowNode>
        <FlowNode $x={87} $y={41.5}>
          <Glyph kind="table" size={4} />
          Create grid
          <NodeButtons />
        </FlowNode>
        <PortLabel $x={95} $y={5.5}>
          In
        </PortLabel>
        <PortLabel $x={96} $y={24.5}>
          Out
        </PortLabel>
        <PortLabel $x={123} $y={24.5}>
          In
        </PortLabel>
        <PortLabel $x={95} $y={33.5}>
          In
        </PortLabel>
        <PortLabel $x={96} $y={51.5}>
          Out
        </PortLabel>
        <PortLabel $x={123} $y={51.5}>
          In
        </PortLabel>
        <PortLabel $x={95} $y={61.5}>
          In
        </PortLabel>
        <CanvasVScroll />
        <CanvasHScroll />
      </Canvas>
    </ModelBody>
  </LightWindow>
);

/* ---------- QGIS main window ---------- */

const QgisBody = styled.div`
  flex: 1;
  display: flex;
  min-height: 0;
`;

const QgisLeft = styled.div`
  width: 79px;
  flex: none;
  display: flex;
  flex-direction: column;
`;

const DockHead = styled.div`
  height: 6px;
  flex: none;
  display: flex;
  justify-content: space-between;
  align-items: center;
  padding: 0 1px;
  color: #666;
  background: #e2e2e2;
`;

const DockClose = styled.span`
  letter-spacing: 1px;
  color: #333;
`;

const DockTools = styled.div`
  height: 7px;
  flex: none;
  display: flex;
  align-items: center;
  gap: 1.5px;
  padding-left: 2px;
`;

const NavTree = styled.div`
  height: 59px;
  flex: none;
  position: relative;
  background: #fff;
  overflow: hidden;
  margin: 1px 1px 1px 0;
  padding-top: 1px;
  box-sizing: border-box;
`;

const NavRow = styled.div`
  height: 6px;
  display: flex;
  align-items: center;
  gap: 1.5px;
  padding-left: 2px;
  color: #555;
`;

const LayerTree = styled.div`
  flex: 1;
  background: #fff;
  margin-right: 1px;
  padding-top: 1px;
`;

const LayerRow = styled.div<{ $sel?: boolean }>`
  height: 6px;
  display: flex;
  align-items: center;
  gap: 1.5px;
  padding-left: 2px;
  background: ${(p) => (p.$sel ? '#bfe5f6' : 'transparent')};
  box-shadow: ${(p) => (p.$sel ? 'inset 0 0 0 1px #9fd2ea' : 'none')};
`;

const LayerName = styled.span<{ $on?: boolean }>`
  color: ${(p) => (p.$on ? '#333' : '#b2b2b2')};
  font-weight: ${(p) => (p.$on ? 700 : 400)};
`;

const CheckBox = styled.span`
  width: 4px;
  height: 4px;
  box-sizing: border-box;
  background: #fff;
  border: 1px solid #aaa;
  flex: none;
`;

const MapPane = styled.div`
  flex: 1;
  min-width: 0;
  background: #052963;
  overflow: hidden;
  display: flex;
`;

const MapSvg = styled.svg`
  width: 100%;
  height: 100%;
  display: block;
`;

const StatusBar = styled.div`
  height: 8px;
  flex: none;
  display: flex;
  align-items: center;
  gap: 2px;
  padding: 0 8px 0 2px;
  color: #666;
  white-space: nowrap;
`;

const StatusField = styled.span<{ $w: number }>`
  width: ${(p) => p.$w}px;
  height: 6px;
  line-height: 6px;
  box-sizing: border-box;
  flex: none;
  background: #fff;
  box-shadow: inset 0 0 0 1px #d8d8d8;
  padding-left: 1.5px;
  overflow: hidden;
  display: inline-block;
`;

const navItems: [string, string, boolean][] = [
  ['Favoritos', 'star', false],
  ['Imco', 'folder', true],
  ['C:\\', 'folder', true],
  ['D:\\', 'folder', true],
  ['GeoPackage', 'pkg', false],
  ['SpatiaLite', 'sqlite', false],
  ['PostGIS', 'cloud', false],
  ['MSSQL', 'flag', true],
  ['Oracle', 'cloud', true],
  ['DB2', 'cloud', true],
];

const india: [number, number][] = [
  [185, 18], [240, 15], [290, 45], [325, 70], [300, 85], [345, 100], [410, 125], [450, 140],
  [480, 140], [490, 110], [520, 115], [580, 105], [640, 85], [690, 110], [702, 138], [690, 150],
  [660, 140], [640, 160], [610, 190], [590, 215], [590, 240], [578, 240], [555, 220], [550, 195],
  [575, 170], [520, 170], [510, 160], [490, 155], [505, 190], [500, 250], [460, 270], [420, 290],
  [380, 340], [330, 370], [315, 385], [310, 440], [290, 482], [210, 482], [190, 430], [160, 340],
  [150, 265], [105, 265], [65, 230], [55, 205], [100, 185], [72, 128], [130, 105], [155, 85],
  [180, 50],
];

const onLand = (x: number, y: number) => {
  let hit = false;
  for (let i = 0, j = india.length - 1; i < india.length; j = i++) {
    const [xi, yi] = india[i];
    const [xj, yj] = india[j];
    if (yi > y !== yj > y && x < ((xj - xi) * (y - yi)) / (yj - yi) + xi) hit = !hit;
  }
  return hit;
};

const near = (x: number, y: number, cx: number, cy: number, rx: number, ry: number) =>
  ((x - cx) * (x - cx)) / (rx * rx) + ((y - cy) * (y - cy)) / (ry * ry) < 1;

const BROWN = [
  '#8a5c5e', '#6a3f4e', '#b07a6c', '#925f62', '#5a3a58', '#2b2c68', '#c49680', '#84505a', '#a86c60', '#3a3060',
];

// picks a pixel colour by rough land type, good enough at this scale
const landColor = (x: number, y: number, r: number) => {
  const pick = (c: string[]) => c[Math.floor(r * c.length)];
  if (x > 495 && y < 172) {
    return pick(['#12a868', '#14b070', '#1aa868', '#2c9e70', '#4a7f88', '#14b070', '#12a868']);
  }
  if (x > 520) return pick(['#5c3a58', '#1f2668', '#86505c', '#1f9a6c', '#2f2760']);
  if (near(x, y, 250, 195, 70, 32)) {
    return pick(['#141f62', '#1b2668', '#2d2560', '#503458', '#12a068', '#1b2668', '#6a3f4e']);
  }
  // the thin green strip across the plains and the block around the delta
  if (near(x, y, 330, 265, 115, 38) || near(x, y, 340, 210, 70, 14)) {
    return pick(['#0fa868', '#16b070', '#12a068', '#643f50', '#1f2668', '#8c5a5a', '#0fa868', '#2d2560']);
  }
  if (near(x, y, 285, 375, 30, 28)) return pick(['#0fa868', '#16b070', '#1f9a68', '#8c5a5a', '#2d2560']);
  if (near(x, y, 195, 58, 42, 36) || near(x, y, 240, 445, 50, 35)) {
    return pick(['#f0d2b4', '#dca88a', '#e8bc98', '#c48670', '#f8e4ce', '#a87064']);
  }
  if (near(x, y, 195, 320, 34, 44)) return pick(['#dca88a', '#c48670', '#e8bc98', '#a87064', '#84505a']);
  if (near(x, y, 172, 410, 16, 60)) return pick(['#12aa70', '#c48670', '#1f9e70', '#e8bc98']);
  return pick(BROWN);
};

const IndiaMap = () => {
  // one path per colour; squares come in clumps so the blur does not average them to mud
  const paths = useMemo(() => {
    let s = 20190;
    const rnd = () => {
      s = (s + 0x6d2b79f5) | 0;
      let t = Math.imul(s ^ (s >>> 15), 1 | s);
      t = (t + Math.imul(t ^ (t >>> 7), 61 | t)) ^ t;
      return ((t ^ (t >>> 14)) >>> 0) / 4294967296;
    };
    const byColor: Record<string, string> = {};
    for (let cx = 48; cx < 708; cx += 12) {
      for (let cy = 12; cy < 484; cy += 12) {
        const jx = cx + (rnd() - 0.5) * 30;
        const jy = cy + (rnd() - 0.5) * 24;
        const base = landColor(jx, jy, rnd());
        for (let x = cx; x < cx + 12; x += 4) {
          for (let y = cy; y < cy + 12; y += 4) {
            if (!onLand(x + (rnd() - 0.5) * 10, y + (rnd() - 0.5) * 10)) continue;
            const r = rnd();
            let c = r < 0.62 ? base : landColor(jx, jy, rnd());
            if (r > 0.985) c = '#f8eee0';
            else if (r > 0.978) c = '#49c3dc';
            byColor[c] = (byColor[c] || '') + `M${x} ${y}h4.2v4.2h-4.2z`;
          }
        }
      }
    }
    return Object.entries(byColor);
  }, []);
  return (
    <MapSvg viewBox="8 17 707 462" preserveAspectRatio="none">
      <rect x="0" y="0" width="720" height="484" fill="#052963" />
      {paths.map(([c, d]) => (
        <path key={c} d={d} fill={c} />
      ))}
      <path d="M300 85L345 100L410 125" stroke="#e9d6c2" strokeWidth="2.5" fill="none" />
      <path d="M450 143L500 145" stroke="#f4f4f4" strokeWidth="4" fill="none" />
      <circle cx="245" cy="95" r="6" fill="#f0d8c0" />
      <circle cx="272" cy="340" r="6" fill="#f3e2cf" />
      <circle cx="490" cy="240" r="5" fill="#f3e2cf" />
      <circle cx="330" cy="130" r="4" fill="#f0d8c0" />
      <path d="M100 130L102 155" stroke="#55d0a0" strokeWidth="6" />
      <path d="M52 200H72M80 205H110M88 190H112" stroke="#3f5a90" strokeWidth="3" />
      <path d="M50 200h6M85 205h8" stroke="#58d4ec" strokeWidth="3" />
      <path d="M480 120L498 112" stroke="#58c4dc" strokeWidth="5" />
      <path d="M588 424L582 466" stroke="#2fa878" strokeWidth="4" />
      <path d="M584 450l-2 16" stroke="#e8dcc0" strokeWidth="3" />
      <path d="M460 270l-14 4M325 70l-24-14" stroke="#3ac0b0" strokeWidth="2.5" />
    </MapSvg>
  );
};

const QgisWindow = () => (
  <LightWindow $x={156} $y={186} $w={319} $h={203}>
    <TitleBar>
      <QLogo size={5} />
      <TitleText>QGIS</TitleText>
      <WinControls>
        <span>–</span>
        <span>▫</span>
        <span>×</span>
      </WinControls>
    </TitleBar>
    <MenuBar $gap={5}>
      <span>Proyecto</span>
      <span>Edición</span>
      <span>Ver</span>
      <span>Capa</span>
      <span>Configuración</span>
      <span>Complementos</span>
      <span>Vectorial</span>
      <span>Ráster</span>
      <span>Base de datos</span>
      <span>Web</span>
      <span>Procesos</span>
      <span>Ayuda</span>
    </MenuBar>
    <ToolBar $gap={1.5} $pad={3}>
      <Tools items="doc folder disk diskadd note dim | hand* pan zoomin zoomout zoomdim grid zoomdim zoomdim zoomdim zoomdim note note dim refresh | zoomdim zoomdim _ dim _ dim _ yellow table table gear sigma table _ dim" />
    </ToolBar>
    <ToolBar $gap={1.5} $pad={3}>
      <Tools items="layer layer2 vector wand blob | dimpen dimpen dim dimnode dimnode dimpen dim dimpen dim dim dim dim | dimpen dimpen label dimpen dimpen dimpen dimpen dimpen | globe | python | book" />
    </ToolBar>
    <QgisBody>
      <QgisLeft>
        <DockHead>
          <span>Navegador</span>
          <DockClose>⧉×</DockClose>
        </DockHead>
        <DockTools>
          <Glyph kind="doc" size={4.5} />
          <Glyph kind="refresh" size={4.5} />
          <Glyph kind="filter" size={4.5} />
          <Glyph kind="mini" size={4.5} />
          <Glyph kind="gear" size={4.5} />
        </DockTools>
        <NavTree>
          {navItems.map(([name, icon, caret]) => (
            <NavRow key={name}>
              <Caret>{caret ? '›' : ''}</Caret>
              <Glyph kind={icon} size={5} />
              {name}
            </NavRow>
          ))}
          <VScroll />
        </NavTree>
        <DockHead>
          <span>Capas</span>
          <DockClose>⧉×</DockClose>
        </DockHead>
        <DockTools>
          <Glyph kind="tick" size={4.5} />
          <Glyph kind="dimnode" size={4.5} />
          <Glyph kind="zoomdim" size={4.5} />
          <Glyph kind="filter" size={4.5} />
          <Glyph kind="dimpen" size={4.5} />
          <Glyph kind="mini" size={4.5} />
          <Glyph kind="mini" size={4.5} />
          <Glyph kind="dim" size={4.5} />
        </DockTools>
        <LayerTree>
          <LayerRow>
            <Caret>⌄</Caret>
            <CheckBox />
            <Glyph kind="mini" size={5} />
            <LayerName $on>Google Maps</LayerName>
          </LayerRow>
          <LayerRow $sel>
            <Caret>⌄</Caret>
            <CheckBox />
            <Glyph kind="mini" size={5} />
            <LayerName>Google Satellite</LayerName>
          </LayerRow>
          <LayerRow>
            <Caret>⌄</Caret>
            <CheckBox />
            <Glyph kind="mini" size={5} />
            <LayerName>OpenStreetMap</LayerName>
          </LayerRow>
        </LayerTree>
      </QgisLeft>
      <MapPane>
        <IndiaMap />
      </MapPane>
    </QgisBody>
    <StatusBar>
      <StatusField $w={60}>⚲ Type to locate (Ctrl+K)</StatusField>
      <span>Elmin</span>
      <span>ordena:</span>
      <StatusField $w={33}>-1897720,-639412</StatusField>
      <Glyph kind="dim" size={4} />
      <span>ss</span>
      <StatusField $w={24}>89,795,332</StatusField>
      <Glyph kind="msg" size={3.5} />
      <span>aplificad:</span>
      <StatusField $w={25}>100%</StatusField>
      <span>rota</span>
      <StatusField $w={24}>0,0 °</StatusField>
      <CheckBox />
      <span>Representar</span>
      <Spacer />
      <span>⊕ EPSG:3857</span>
      <Glyph kind="msg" size={5} />
    </StatusBar>
  </LightWindow>
);

export default function App() {
  return (
    <>
      <GlobalStyle />
      <Stage>
        <IdeWindow />
        <ModelWindow />
        <QgisWindow />
      </Stage>
    </>
  );
}
